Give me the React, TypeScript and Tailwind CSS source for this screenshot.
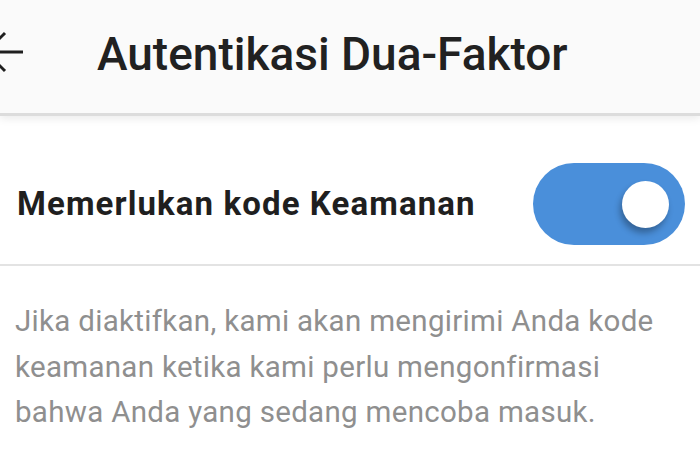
import React from "react";

function BackArrow() {
  return (
    <svg width="26" height="44" viewBox="0 0 26 44" className="shrink-0 mt-[30px]" fill="none" stroke="#1f1f1f" strokeWidth="3">
      <line x1="-14" y1="22" x2="23" y2="22" />
      <line x1="-14" y1="22" x2="5" y2="3" />
      <line x1="-14" y1="22" x2="5" y2="41" />
    </svg>
  );
}

export default function App() {
  return (
    <div className="w-[700px] h-[465px] overflow-hidden bg-white font-['Roboto',sans-serif]">
      {/* header */}
      <div className="h-[116px] bg-[#fafafa] border-b-[3px] border-[#dcdcdc] shadow-[0_3px_8px_rgba(0,0,0,0.08)] flex items-start relative z-10">
        <BackArrow />
        <h1 className="ml-[71px] mt-[31px] text-[46px] leading-none font-medium text-[#212121]">Autentikasi Dua-Faktor</h1>
      </div>

      {/* toggle row */}
      <div className="h-[150px] flex items-center justify-between pl-[17px] pr-[15px] pt-[28px] border-b-2 border-[#e3e3e3]">
        <p className="text-[33px] font-bold tracking-[1.1px] text-[#1f1f1f]">Memerlukan kode Keamanan</p>
        <div className="w-[152px] h-[82px] rounded-full bg-[#4a8fda] flex items-center justify-end pr-[16px]">
          <div className="w-[47px] h-[47px] rounded-full bg-white shadow-[-2px_5px_6px_rgba(0,0,0,0.3)]" />
        </div>
      </div>

      {/* description */}
      <div className="pt-[33px] pl-[15px] pr-[40px]">
        <p className="text-[29.5px] leading-[45.5px] tracking-[0.3px] text-[#8f8f8f]">
          Jika diaktifkan, kami akan mengirimi Anda kode keamanan ketika kami perlu mengonfirmasi bahwa Anda yang sedang mencoba masuk.
        </p>
      </div>
    </div>
  );
}
